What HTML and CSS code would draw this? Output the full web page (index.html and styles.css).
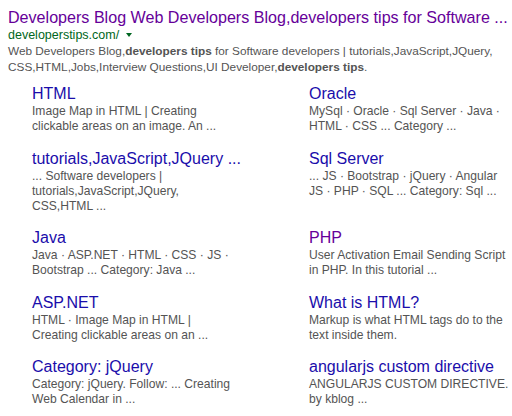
FILE: index.html
```html
<!DOCTYPE html>
<html>
<head>
<meta charset="utf-8">
<link rel="stylesheet" href="styles.css">
</head>
<body>
<div class="result">
  <h3 class="title"><a class="visited" href="#">Developers Blog Web Developers Blog,developers tips for Software ...</a></h3>
  <div class="url">developerstips.com/ <span class="arrow"></span></div>
  <div class="snippet">
    <span class="line">Web Developers Blog,<b>developers tips</b> for Software developers | tutorials,JavaScript,JQuery,</span>
    <span class="line">CSS,HTML,Jobs,Interview Questions,UI Developer,<b>developers tips</b>.</span>
  </div>
  <div class="sitelinks">
    <div class="sl">
      <a class="sl-title" href="#">HTML</a>
      <div class="sl-snip"><span class="line">Image Map in HTML | Creating</span><span class="line">clickable areas on an image. An ...</span></div>
    </div>
    <div class="sl">
      <a class="sl-title" href="#">Oracle</a>
      <div class="sl-snip"><span class="line">MySql · Oracle · Sql Server · Java ·</span><span class="line">HTML · CSS ... Category ...</span></div>
    </div>
    <div class="sl">
      <a class="sl-title" href="#">tutorials,JavaScript,JQuery ...</a>
      <div class="sl-snip"><span class="line">... Software developers |</span><span class="line">tutorials,JavaScript,JQuery,</span><span class="line">CSS,HTML ...</span></div>
    </div>
    <div class="sl">
      <a class="sl-title" href="#">Sql Server</a>
      <div class="sl-snip"><span class="line">... JS · Bootstrap · jQuery · Angular</span><span class="line">JS · PHP · SQL ... Category: Sql ...</span></div>
    </div>
    <div class="sl">
      <a class="sl-title" href="#">Java</a>
      <div class="sl-snip"><span class="line">Java · ASP.NET · HTML · CSS · JS ·</span><span class="line">Bootstrap ... Category: Java ...</span></div>
    </div>
    <div class="sl">
      <a class="sl-title visited" href="#">PHP</a>
      <div class="sl-snip"><span class="line">User Activation Email Sending Script</span><span class="line">in PHP. In this tutorial ...</span></div>
    </div>
    <div class="sl">
      <a class="sl-title" href="#">ASP.NET</a>
      <div class="sl-snip"><span class="line">HTML · Image Map in HTML |</span><span class="line">Creating clickable areas on an ...</span></div>
    </div>
    <div class="sl">
      <a class="sl-title" href="#">What is HTML?</a>
      <div class="sl-snip"><span class="line">Markup is what HTML tags do to the</span><span class="line">text inside them.</span></div>
    </div>
    <div class="sl">
      <a class="sl-title" href="#">Category: jQuery</a>
      <div class="sl-snip"><span class="line">Category: jQuery. Follow: ... Creating</span><span class="line">Web Calendar in ...</span></div>
    </div>
    <div class="sl">
      <a class="sl-title" href="#">angularjs custom directive</a>
      <div class="sl-snip"><span class="line">ANGULARJS CUSTOM DIRECTIVE.</span><span class="line">by kblog ...</span></div>
    </div>
  </div>
</div>
</body>
</html>
```
FILE: styles.css
```css
html, body {
  margin: 0;
  padding: 0;
  background: #ffffff;
}
body {
  font-family: "Liberation Sans", Arial, sans-serif;
  color: #545454;
}
a {
  text-decoration: none;
  color: #1a0dab;
}
a.visited {
  color: #660099;
}
.result {
  padding: 6px 0 0 8px;
}
.title {
  margin: 0;
  font-size: 16.1px;
  font-weight: normal;
  line-height: 22px;
  white-space: nowrap;
}
.url {
  font-size: 12.5px;
  line-height: 15px;
  color: #006621;
}
.arrow {
  display: inline-block;
  width: 0;
  height: 0;
  border-left: 3px solid transparent;
  border-right: 3px solid transparent;
  border-top: 4px solid #006621;
  margin-left: 3px;
  vertical-align: 2px;
}
.snippet {
  font-size: 11.8px;
  line-height: 16px;
}
.line {
  display: block;
  white-space: nowrap;
}
.sitelinks {
  display: grid;
  grid-template-columns: 277px 1fr;
  row-gap: 14.5px;
  margin: 9px 0 0 24px;
}
.sl-title {
  display: block;
  font-size: 16px;
  line-height: 20px;
  white-space: nowrap;
}
.sl-snip {
  font-size: 12.1px;
  line-height: 15px;
}
```
